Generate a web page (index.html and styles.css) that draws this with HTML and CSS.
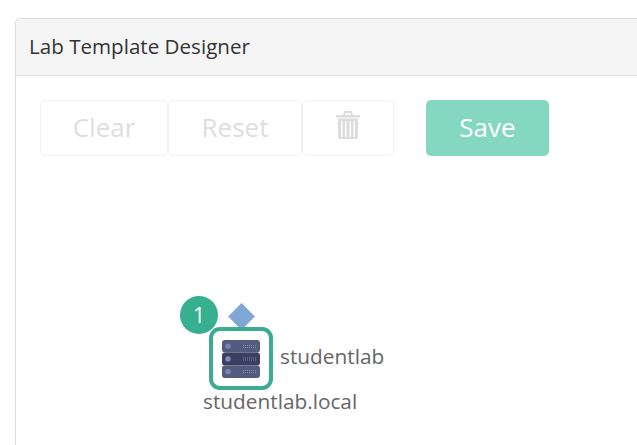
FILE: index.html
```html
<!DOCTYPE html>
<html lang="en">
<head>
    <meta charset="UTF-8">
    <title>Lab Template Designer</title>
    <link rel="stylesheet" href="styles.css">
</head>
<body>
<div class="panel">
    <div class="panel-heading">Lab Template Designer</div>
    <div class="panel-body">
        <div class="toolbar">
            <div class="btn-group">
                <a href="#" class="btn btn-clear">Clear</a>
                <a href="#" class="btn btn-reset">Reset</a>
                <a href="#" class="btn btn-trash">
                    <svg width="24" height="28" viewBox="0 0 24 28">
                        <path fill="#dcdcdc" fill-rule="evenodd" d="M7 4l1-4h8l1 4h7v2.500H0V4zM9 4h6l-.500-2h-5zM2 7.500h20V26a2 2 0 0 1-2 2H4a2 2 0 0 1-2-2zM5 10v16h1.500V10zM9 10v16h1.500V10zM13.500 10v16H15V10zM17.500 10v16H19V10z"/>
                    </svg>
                </a>
            </div>
            <a href="#" class="btn-save">Save</a>
        </div>
        <div class="canvas">
            <div class="node">
                <span class="badge">1</span>
                <span class="port"></span>
                <div class="node-box">
                    <svg width="38" height="38" viewBox="0 0 38 38">
                        <rect x="0" y="0" width="38" height="12.500" rx="3" fill="#535b80"/>
                        <rect x="0" y="12.500" width="38" height="13" rx="3" fill="#3a4160"/>
                        <rect x="0" y="25.500" width="38" height="12.500" rx="3" fill="#535b80"/>
                        <circle cx="6" cy="6.200" r="2.700" fill="#7a83b0"/>
                        <circle cx="6" cy="19" r="2.700" fill="#8089b8"/>
                        <circle cx="6" cy="31.800" r="2.700" fill="#7a83b0"/>
                        <path d="M21 5.500h13M21 7.500h13M21 18h13M21 20h13M21 30.500h13M21 32.500h13" stroke="#7f88ad" stroke-width="1" stroke-dasharray="1 1"/>
                    </svg>
                </div>
                <span class="node-name">studentlab</span>
                <span class="node-host">studentlab.local</span>
            </div>
        </div>
    </div>
</div>
</body>
</html>
```
FILE: styles.css
```css
@charset "UTF-8";
html,body{margin:0;padding:0;background:#fff;overflow:hidden;height:445px;}
body{font-family:"Open Sans","Noto Sans",sans-serif;color:#333;}
a{text-decoration:none;}

.panel{
    margin:18px 0 0 15px;
    width:640px;
    height:440px;
    border:1px solid #ddd;
    border-right:0;
    border-radius:5px 0 0 0;
}
.panel-heading{
    height:56px;
    line-height:54px;
    padding-left:13px;
    font-size:20.600px;
    background:#f5f5f5;
    border-bottom:1px solid #ddd;
    border-radius:5px 0 0 0;
}
.panel-body{
    padding:24px 0 0 24px;
}
.toolbar{
    display:flex;
    gap:32px;
}
.btn-group{
    display:flex;
}
.btn{
    box-sizing:border-box;
    height:56px;
    padding-bottom:2px;
    display:flex;
    align-items:center;
    justify-content:center;
    border:1px solid #f0f0f0;
    border-radius:5px;
    color:#dedede;
    font-size:26px;
}
.btn-clear{width:128px;}
.btn-reset{width:134px;}
.btn-trash{width:92px;padding-bottom:6px;}
.btn-save{
    width:123px;
    height:56px;
    line-height:54px;
    text-align:center;
    font-size:26px;
    color:#fff;
    background:#84d8c0;
    border-radius:5px;
}
.canvas{
    position:relative;
    height:280px;
}
.node{
    position:absolute;
    left:0;
    top:0;
}
.badge{
    position:absolute;
    left:140px;
    top:140px;
    width:38px;
    height:38px;
    line-height:38px;
    text-align:center;
    border-radius:50%;
    background:#37b08f;
    color:#fff;
    font-size:21px;
    z-index:2;
}
.port{
    position:absolute;
    left:192px;
    top:151px;
    width:19px;
    height:19px;
    background:#7fa8d8;
    transform:rotate(45deg);
}
.node-box{
    position:absolute;
    left:169px;
    top:171px;
    box-sizing:border-box;
    width:64px;
    height:63px;
    border:4.500px solid #3bac8f;
    border-radius:11px;
    display:flex;
    align-items:center;
    justify-content:center;
    background:#fff;
}
.node-name,.node-host{
    position:absolute;
    font-size:20.800px;
    color:#666;
    white-space:nowrap;
}
.node-name{left:240px;top:186px;}
.node-host{left:163px;top:231px;}
```
